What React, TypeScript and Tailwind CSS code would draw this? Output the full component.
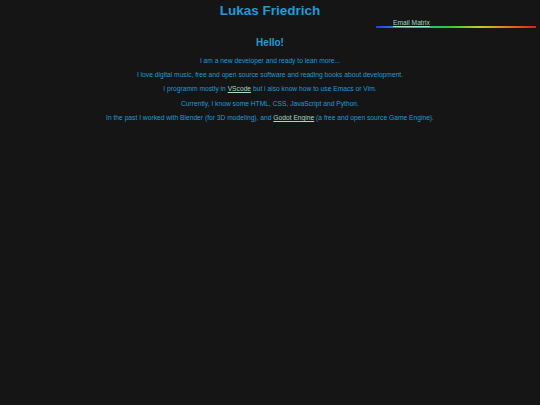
import React from 'react';

const App: React.FC = () => {
    return (
        <div className="min-h-[405px] bg-[#151515] text-[#1e9dd8] font-['Liberation_Sans',Arial,sans-serif]">
            <header className="flex flex-col items-center pt-[3px]">
                <h1 className="text-[13.5px] leading-[16px] font-bold">Lukas Friedrich</h1>
                <nav className="self-end mr-[4px] w-[160px]">
                    <div className="pl-[17px] text-[6.7px] leading-[7px]">
                        <a href="#" className="text-[#9fdcc0] underline">Email Matrix</a>
                    </div>
                    <div className="h-[2px] bg-[linear-gradient(to_right,#1f3fe0,#12b8d8_20%,#2ec838_45%,#c8c82a_65%,#e07a20_82%,#d81e1e)]" />
                </nav>
            </header>
            <main className="flex flex-col items-center text-center">
                <h2 className="mt-[9px] text-[10px] leading-[12px] font-bold">Hello!</h2>
                <div className="mt-[7.5px] flex flex-col gap-[6.7px] text-[6.7px] leading-[7.7px]">
                    <p>I am a new developer and ready to lean more...</p>
                    <p>I love digital music, free and open source software and reading books about development.</p>
                    <p>
                        I programm mostly in <a href="#" className="text-[#9fdcc0] underline">VScode</a> but i also know how to use Emacs or Vim.
                    </p>
                    <p>Currently, I know some HTML, CSS, JavaScript and Python.</p>
                    <p>
                        In the past I worked with Blender (for 3D modeling), and{' '}
                        <a href="#" className="text-[#9fdcc0] underline">Godot Engine</a> (a free and open source Game Engine).
                    </p>
                </div>
            </main>
        </div>
    );
};

export default App;
